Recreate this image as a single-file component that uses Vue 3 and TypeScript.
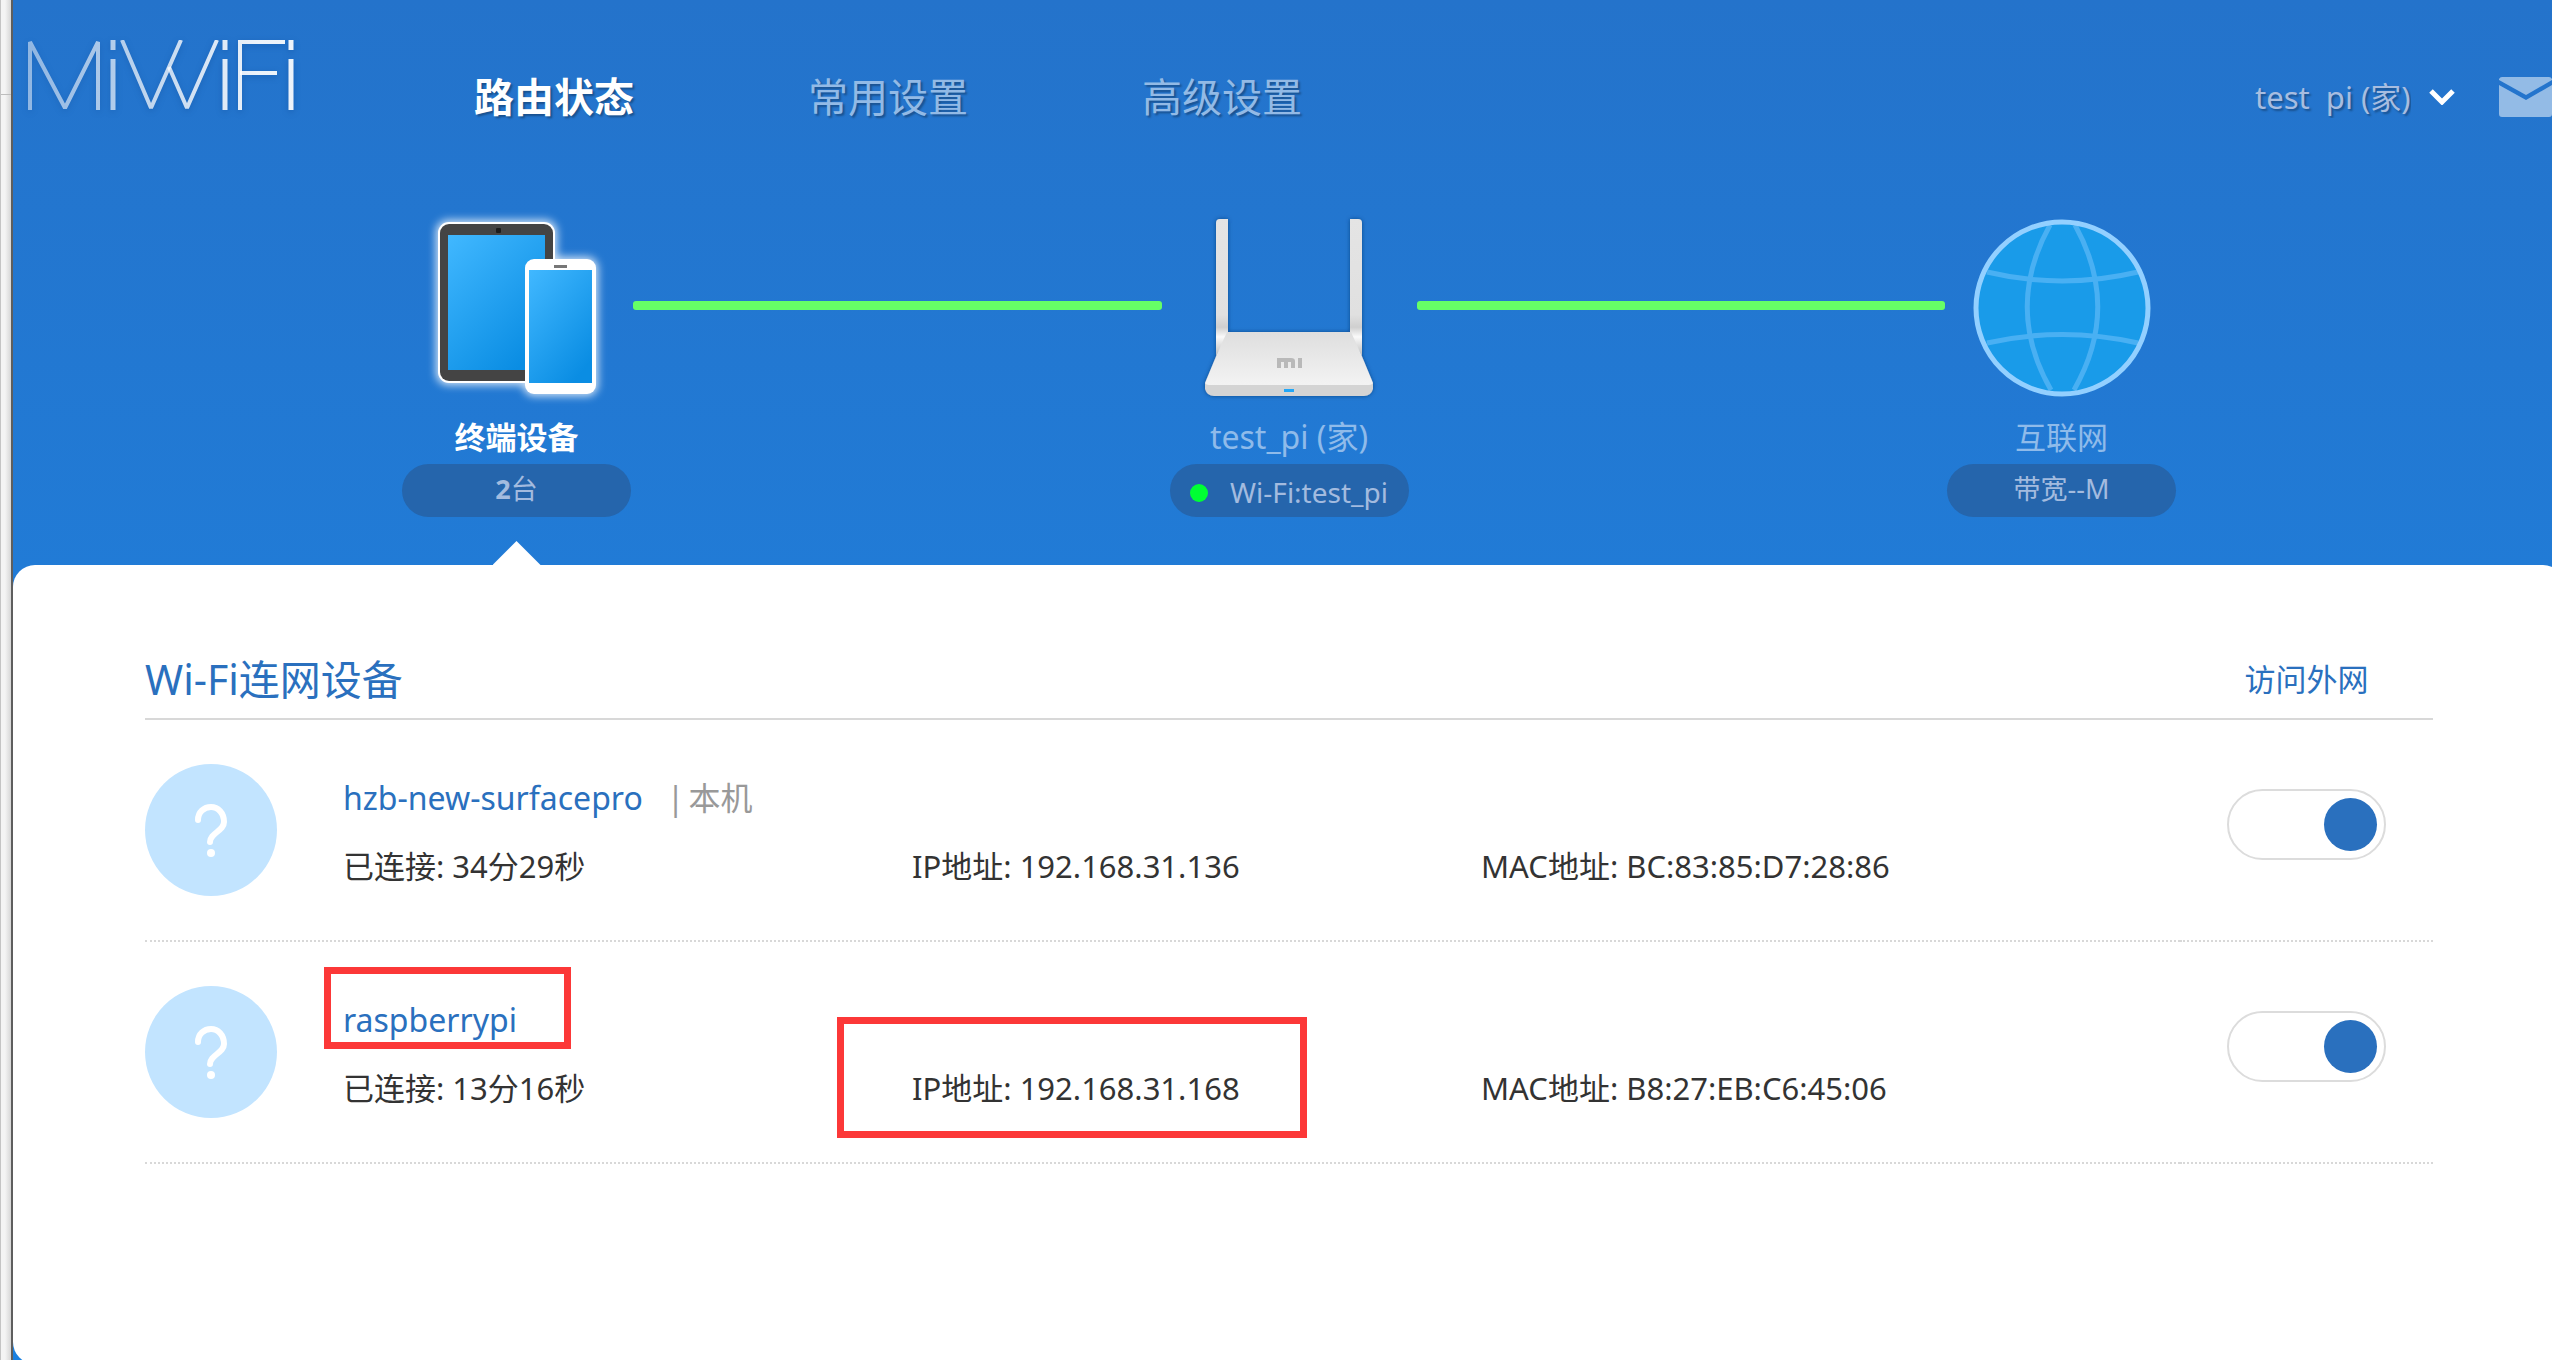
<script setup lang="ts">
import { ref } from 'vue'

interface Device {
  id: string
  name: string
  self: boolean
  online: string
  ip: string
  mac: string
  access: boolean
  marked: boolean
}

const navItems = ['路由状态', '常用设置', '高级设置']
const activeNav = ref(0)
const routers = ['test\u00a0\u00a0pi (家)']
const router = ref(routers[0])

const devices = ref<Device[]>([
  {
    id: 'surface',
    name: 'hzb-new-surfacepro',
    self: true,
    online: '34分29秒',
    ip: '192.168.31.136',
    mac: 'BC:83:85:D7:28:86',
    access: true,
    marked: false,
  },
  {
    id: 'pi',
    name: 'raspberrypi',
    self: false,
    online: '13分16秒',
    ip: '192.168.31.168',
    mac: 'B8:27:EB:C6:45:06',
    access: true,
    marked: true,
  },
])
</script>

<template>
  <div class="window">
    <div class="edge"><div class="edge-tick"></div></div>
    <div class="app">
      <header class="header">
        <a class="logo" href="#" aria-label="MiWiFi">
          <svg width="266" height="70" viewBox="0 0 266 70" fill="none" stroke="url(#logoFade)" stroke-width="5">
            <defs>
              <linearGradient id="logoFade" gradientUnits="userSpaceOnUse" x1="0" y1="0" x2="230" y2="0">
                <stop offset="0" stop-color="#fff" stop-opacity="0.5" />
                <stop offset="1" stop-color="#fff" stop-opacity="0.92" />
              </linearGradient>
            </defs>
            <polyline stroke-linejoin="bevel" stroke-width="4" points="2,70 2,2 37,68 70,2 70,70" />
            <line x1="85" y1="0" x2="85" y2="10" />
            <line x1="85" y1="19" x2="85" y2="70" />
            <polyline stroke-linejoin="bevel" stroke-width="4" points="94,0 123,68 153,0" />
            <polyline stroke-linejoin="bevel" stroke-width="4" points="141,27 159,68 189,0" />
            <line x1="197" y1="0" x2="197" y2="10" />
            <line x1="197" y1="19" x2="197" y2="70" />
            <polyline stroke-width="4" points="212,70 212,2 257,2" />
            <line stroke-width="4" x1="212" y1="33" x2="249" y2="33" />
            <line x1="263" y1="0" x2="263" y2="10" />
            <line x1="263" y1="19" x2="263" y2="70" />
          </svg>
        </a>
        <nav class="nav">
          <a
            v-for="(item, i) in navItems"
            :key="item"
            href="#"
            :class="{ active: i === activeNav }"
            @click.prevent="activeNav = i"
            >{{ item }}</a
          >
        </nav>
        <div class="account">
          <select v-model="router" class="router-select" aria-label="路由器">
            <option v-for="r in routers" :key="r" :value="r">{{ r }}</option>
          </select>
          <svg class="chevron" width="26" height="16" viewBox="0 0 26 16">
            <path d="M2 2l11 11L24 2" fill="none" stroke="#fff" stroke-width="5" />
          </svg>
          <button class="mail" type="button" aria-label="消息">
            <svg width="53" height="40" viewBox="0 0 53 40">
              <path fill="#93bbe6" d="M3 0h47q2 0 3 2v1L27 18 0 3V2q1-2 3-2z" />
              <path fill="#93bbe6" d="M0 8l27 15L53 8v29q0 3-3 3H3q-3 0-3-3z" />
            </svg>
          </button>
        </div>
      </header>

      <section class="topology">
        <div class="node active">
          <svg class="pic" width="229" height="190" viewBox="0 0 229 190">
            <defs>
              <linearGradient id="screen" x1="0" y1="0" x2="0.7" y2="1">
                <stop offset="0" stop-color="#41b8ff" />
                <stop offset="1" stop-color="#0a8de3" />
              </linearGradient>
              <filter id="glow" x="-20%" y="-20%" width="140%" height="140%">
                <feGaussianBlur stdDeviation="4" />
              </filter>
            </defs>
            <g fill="#fff" opacity="0.8" filter="url(#glow)">
              <rect x="34" y="1" width="121" height="165" rx="12" />
              <rect x="121" y="38" width="75" height="139" rx="11" />
            </g>
            <rect x="36" y="3" width="117" height="161" rx="11" fill="#fff" />
            <rect x="38" y="5" width="113" height="157" rx="9" fill="#444" />
            <rect x="46" y="16" width="97" height="135" fill="url(#screen)" />
            <rect x="94" y="9" width="5" height="5" rx="1" fill="#1c1c1c" />
            <rect x="123" y="40" width="71" height="135" rx="9" fill="#fff" />
            <rect x="127" y="51" width="63" height="113" fill="url(#screen)" />
            <rect x="152" y="46" width="13" height="3" fill="#777" />
          </svg>
          <div class="node-name">终端设备</div>
          <div class="pill"><span><b>2</b>台</span></div>
        </div>
        <div class="link link-left"></div>
        <div class="node node-router">
          <svg class="pic" width="239" height="190" viewBox="0 0 239 190">
            <defs>
              <linearGradient id="body" x1="0" y1="0" x2="0" y2="1">
                <stop offset="0" stop-color="#dedede" />
                <stop offset="1" stop-color="#f3f3f3" />
              </linearGradient>
              <linearGradient id="antenna" x1="0" y1="0" x2="0" y2="1">
                <stop offset="0" stop-color="#e4e4e4" />
                <stop offset="0.7" stop-color="#e0e0e0" />
                <stop offset="0.79" stop-color="#cfcfcf" />
                <stop offset="0.86" stop-color="#fafafa" />
                <stop offset="1" stop-color="#bdbdbd" />
              </linearGradient>
              <filter id="soft" x="-10%" y="-10%" width="120%" height="120%">
                <feDropShadow dx="0" dy="0" stdDeviation="2" flood-color="#0a3c7c" flood-opacity="0.8" />
              </filter>
            </defs>
            <g transform="translate(-1 0)">
              <g filter="url(#soft)">
                <path fill="url(#antenna)" d="M47 137V4q0-4 4-4h8v115z" />
                <path fill="url(#antenna)" d="M193 137V4q0-4-4-4h-8v115z" />
                <path fill="#d4d4d4" d="M36 164v6q2 7 9 7h150q7 0 9-7v-6l-20-4H56z" />
                <path fill="url(#body)" d="M58 113h124l10 22 12 29q-1 2-4 2H40q-3 0-4-2l12-29z" />
              </g>
              <path fill="#b9b9b9" d="M108 149v-10h14q4 0 4 3v7h-4v-6h-10v6zM115 143h4v6h-4zM129 139h4v10h-4z" />
              <rect x="115" y="170" width="10" height="3" fill="#22a7f7" />
            </g>
          </svg>
          <div class="node-name">test_pi (家)</div>
          <div class="pill"><i class="dot"></i><span>Wi-Fi:test_pi</span></div>
        </div>
        <div class="link link-right"></div>
        <div class="node">
          <svg class="pic" width="229" height="190" viewBox="0 0 229 190" fill="none" stroke-width="5">
            <g transform="translate(27 0)">
              <circle cx="88" cy="89" r="86" fill="#199be9" />
              <g stroke="#49b0f3">
                <path d="M76 6Q30 89 77 171" />
                <path d="M101 6Q147 89 100 171" />
                <path d="M13 53Q88 71 164 53" />
                <path d="M13 124Q88 107 164 124" />
              </g>
              <circle cx="88" cy="89" r="86" stroke="#93d0ff" />
            </g>
          </svg>
          <div class="node-name">互联网</div>
          <div class="pill"><span>带宽--M</span></div>
        </div>
      </section>

      <main class="panel">
        <table class="devices">
          <thead>
            <tr>
              <th class="title" scope="col">Wi-Fi连网设备</th>
              <th id="access" class="access" scope="col">访问外网</th>
            </tr>
          </thead>
          <tbody>
            <tr v-for="d in devices" :key="d.id">
              <td>
                <div class="device">
                  <svg class="avatar" width="132" height="132" viewBox="0 0 132 132">
                    <circle cx="66" cy="66" r="66" fill="#c2e4ff" />
                    <path
                      d="M53 56C53 48 59 43 66 43s13 6 13 15c0 9-14 11-14 20"
                      fill="none"
                      stroke="#fff"
                      stroke-width="6"
                      stroke-linecap="round"
                    />
                    <circle cx="66" cy="89" r="4" fill="#fff" />
                  </svg>
                  <div class="info">
                    <div class="name-line">
                      <a :id="d.id" class="name" href="#">{{ d.name }}<i v-if="d.marked" class="mark mark-name"></i></a>
                      <span v-if="d.self" class="self"><span>|</span><span>本机</span></span>
                    </div>
                    <div class="facts">
                      <span>已连接: {{ d.online }}</span>
                      <span class="fact">IP地址: {{ d.ip }}<i v-if="d.marked" class="mark mark-ip"></i></span>
                      <span>MAC地址: {{ d.mac }}</span>
                    </div>
                  </div>
                </div>
              </td>
              <td class="access">
                <input v-model="d.access" class="switch" type="checkbox" :aria-labelledby="'access ' + d.id" />
              </td>
            </tr>
          </tbody>
        </table>
      </main>
    </div>
  </div>
</template>

<style>
body {
  margin: 0;
}
</style>

<style scoped>
.window {
  display: flex;
  height: 100vh;
  overflow: hidden;
  font-family: 'Noto Sans', 'Noto Sans CJK SC', sans-serif;
  font-size: 31px;
}

a {
  color: inherit;
  text-decoration: none;
}

.edge {
  box-sizing: border-box;
  flex: none;
  width: 13px;
  border-left: 1px solid #c4c4c4;
  border-right: 2px solid #5e5e5e;
  background: linear-gradient(90deg, #f4f4f4 40%, #d6d6d6);
}

.edge-tick {
  height: 94px;
  border-bottom: 1px solid #bdbdbd;
}

.app {
  display: flex;
  flex: 1;
  flex-direction: column;
  min-width: 0;
  background: linear-gradient(#2473cb, #217bd6 42%, #1a80e0);
}

.header {
  display: flex;
  flex: none;
  align-items: center;
  height: 194px;
  padding-left: 15px;
}

.logo {
  align-self: flex-start;
  margin-top: 40px;
}

.logo svg {
  display: block;
  filter: drop-shadow(0 2px 3px rgba(0, 50, 120, 0.3));
}

.nav {
  display: flex;
  gap: 174px;
  margin-left: 180px;
  padding-bottom: 4px;
  color: #92bae6;
  font-size: 40px;
  text-shadow: 2px 2px 2px rgba(0, 0, 0, 0.3);
}

.nav .active {
  color: #fff;
  font-weight: 700;
}

.account {
  display: flex;
  align-items: center;
  margin-left: auto;
}

.router-select {
  appearance: none;
  border: 0;
  padding: 0;
  background: none;
  color: #a7bde0;
  font: inherit;
  text-shadow: 2px 2px 2px rgba(0, 0, 0, 0.3);
}

.chevron {
  margin: 0 44px 0 18px;
}

.mail {
  border: 0;
  padding: 0;
  background: none;
}

.mail svg {
  display: block;
}

.topology {
  display: flex;
  flex: none;
  height: 346px;
  padding: 25px 376px 0 389px;
}

.node {
  position: relative;
  flex: none;
  width: 229px;
  color: #8fbbea;
  text-align: center;
}

.node-router {
  width: 239px;
}

.pic {
  display: block;
  overflow: visible;
}

.node-name {
  height: 55px;
  line-height: 56px;
}

.node-router .node-name {
  font-size: 32px;
}

.node.active .node-name {
  color: #fff;
  font-weight: 700;
}

.node.active::after {
  position: absolute;
  bottom: 0;
  left: 50%;
  width: 48px;
  height: 24px;
  margin-left: -24px;
  background: #fff;
  clip-path: polygon(50% 0, 100% 100%, 0 100%);
  content: '';
}

.pill {
  display: flex;
  align-items: center;
  justify-content: center;
  gap: 22px;
  height: 53px;
  border-radius: 27px;
  background: #2565ac;
  color: #a3bbdf;
  font-size: 27px;
  line-height: 50px;
}

.pill span {
  height: 53px;
}

.node-router .pill {
  font-size: 28px;
  line-height: 56px;
}

.dot {
  width: 18px;
  height: 18px;
  margin-top: 4px;
  border-radius: 50%;
  background: #00ff33;
}

.link {
  flex: 1;
  height: 9px;
  margin: 82px 8px 0 2px;
  border-radius: 3px;
  background: #66ff66;
}

.link-right {
  margin: 82px 2px 0 8px;
}

.panel {
  flex: 1;
  margin: 0 -13px -4px 0;
  padding: 89px 132px 0;
  border-radius: 22px;
  background: #fff;
  color: #333;
}

.devices {
  width: 100%;
  border-collapse: collapse;
}

th,
td {
  padding: 0;
  text-align: left;
  vertical-align: top;
}

th {
  height: 64px;
  border-bottom: 2px solid #d8d8d8;
  color: #2a70be;
  font-weight: 400;
  line-height: 51px;
}

.title {
  font-size: 41px;
}

.access {
  width: 253px;
  text-align: center;
}

td {
  height: 220px;
  border-bottom: 2px dotted #d8d8d8;
}

.device {
  display: flex;
  gap: 66px;
  padding-top: 44px;
}

.avatar {
  flex: none;
}

.info {
  flex: 1;
  line-height: 68px;
}

.name-line {
  display: flex;
  gap: 24px;
  font-size: 32px;
}

.name {
  position: relative;
  color: #2a70be;
}

.self {
  display: flex;
  gap: 4px;
  color: #999;
}

.facts {
  display: grid;
  grid-template-columns: 569px 569px 1fr;
}

.fact {
  position: relative;
}

.mark {
  position: absolute;
  box-sizing: border-box;
  border: 7px solid #fc3838;
}

.mark-name {
  top: -19px;
  left: -19px;
  width: 247px;
  height: 82px;
}

.mark-ip {
  top: -37px;
  left: -75px;
  width: 470px;
  height: 121px;
}

.switch {
  appearance: none;
  box-sizing: border-box;
  width: 159px;
  height: 71px;
  margin: 69px 0 0;
  padding: 7px;
  border: 2px solid #dcdcdc;
  border-radius: 36px;
  background: #fff;
}

.switch::before {
  display: block;
  width: 53px;
  height: 53px;
  border-radius: 50%;
  background: #ccc;
  content: '';
}

.switch:checked::before {
  margin-left: auto;
  background: #2a70be;
}
</style>
